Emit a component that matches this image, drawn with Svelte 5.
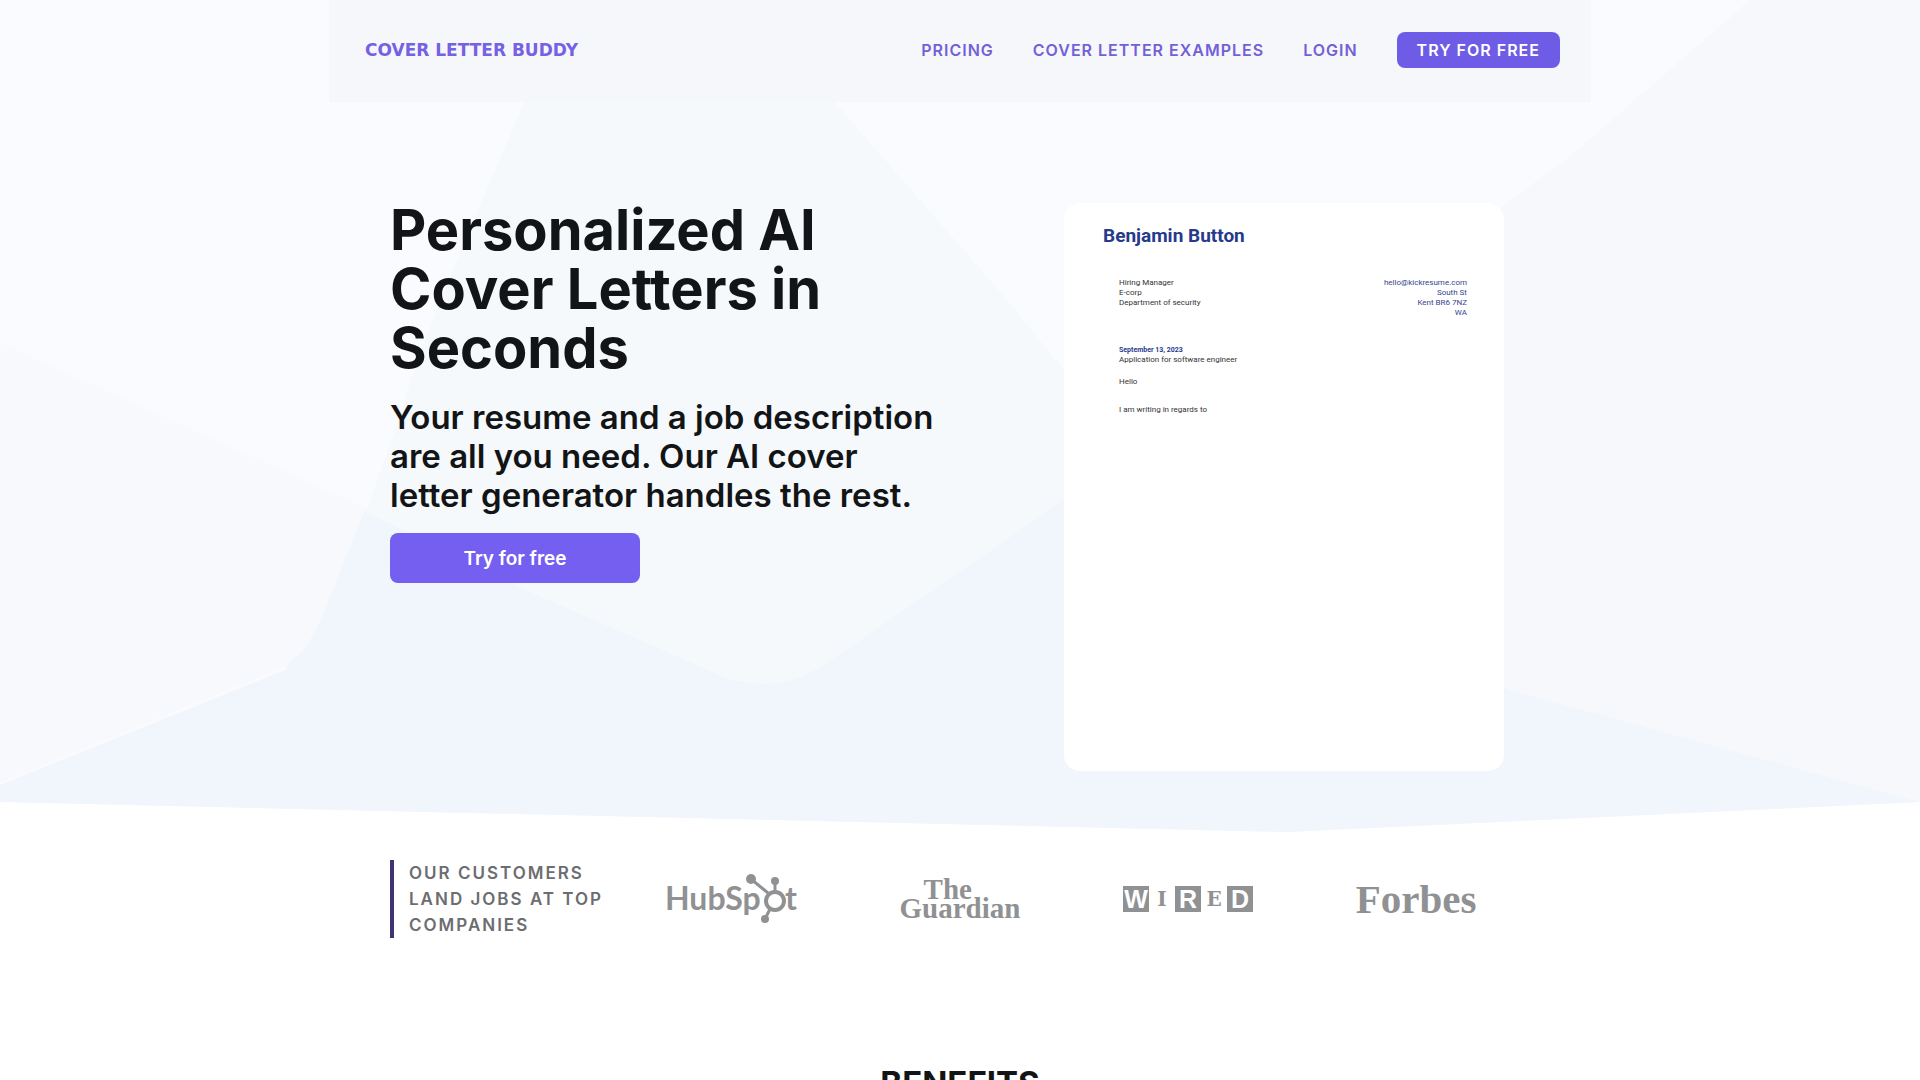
<script>
  const links = [
    { label: 'Pricing', href: '#pricing' },
    { label: 'Cover letter examples', href: '#examples' },
    { label: 'Login', href: '#login' }
  ];
  const wired = ['W', 'I', 'R', 'E', 'D'];
</script>

<div class="page">
  <section class="top">
    <svg class="backdrop" viewBox="0 0 1920 832" preserveAspectRatio="none" aria-hidden="true">
      <path fill="#f9fbfe" d="M0 0H1920V802L1287 832L0 802Z" />
      <path fill="#f1f5fc" d="M0 785L285 670L366 508L1064 500L1510 690L1920 802L1287 832L0 802Z" />
      <path fill="#f7f9fc" d="M0 343L366 508L323 614Q307 655 281 668L0 783Z" />
      <path fill="#f5f9fc" d="M530 90H824L1007 300L1064 370V500L830 661Q797 684 765 684Q733 684 708 670L530 592L366 512Q382 471 414 371Q442 290 530 90Z" />
      <path fill="#f7f8fb" d="M1750 0H1920V802L1510 690L1300 610V400Q1460 230 1560 165Z" />
    </svg>

    <header class="nav">
      <a class="brand" href="#home">COVER LETTER BUDDY</a>
      <nav class="links" aria-label="Main">
        {#each links as link}
          <a href={link.href}>{link.label}</a>
        {/each}
        <a class="pill" href="#try">Try for free</a>
      </nav>
    </header>

    <div class="hero">
      <div class="pitch">
        <h1>Personalized AI Cover Letters in Seconds</h1>
        <p>Your resume and a job description are all you need. Our AI cover letter generator handles the rest.</p>
        <button type="button">Try for free</button>
      </div>
      <article class="letter">
        <h2>Benjamin Button</h2>
        <div class="parties">
          <div>Hiring Manager<br />E-corp<br />Department of security</div>
          <address>hello@kickresume.com<br />South St<br />Kent BR6 7NZ<br />WA</address>
        </div>
        <div class="subject"><strong>September 13, 2023</strong><br />Application for software engineer</div>
        <p class="hello">Hello</p>
        <p class="body">I am writing in regards to</p>
      </article>
    </div>
  </section>

  <section class="customers">
    <p class="claim">Our customers land jobs at top companies</p>
    <div class="logos">
      <svg class="hubspot" viewBox="0 0 132 50" role="img" aria-label="HubSpot">
        <g fill="#8f9193">
          <text x="-1" y="36" font-size="32">HubSp</text>
          <text x="119" y="36" font-size="32">t</text>
          <circle cx="85" cy="5" r="5" />
          <circle cx="109" cy="7" r="4" />
          <circle cx="99" cy="45" r="4" />
        </g>
        <g fill="none" stroke="#8f9193">
          <circle cx="109" cy="27" r="9" stroke-width="4" />
          <path stroke-width="3" d="M85 5L102 19M109 7V18M104 35L99 45" />
        </g>
      </svg>
      <div class="guardian"><span class="the">The</span><span>Guardian</span></div>
      <div class="wired">
        {#each wired as letter, i}
          <span class:boxed={i % 2 === 0}>{letter}</span>
        {/each}
      </div>
      <div class="forbes">Forbes</div>
    </div>
  </section>

  <h2 class="benefits">BENEFITS</h2>
</div>

<style>
  :global(body) {
    margin: 0;
    background: #fff;
  }
  .page {
    height: 100vh;
    overflow: hidden;
    font-family: Inter, 'Liberation Sans', sans-serif;
    color: #131416;
  }
  .top {
    position: relative;
    padding-bottom: 61px;
  }
  .backdrop {
    position: absolute;
    inset: 0;
    width: 100%;
    height: 100%;
  }
  .nav {
    position: relative;
    box-sizing: border-box;
    max-width: 1262px;
    height: 102px;
    margin: 0 auto;
    padding: 0 31px 2px 36px;
    display: flex;
    align-items: center;
    justify-content: space-between;
    background: #f6f7fa;
  }
  .nav a {
    color: #7360d8;
    text-decoration: none;
  }
  .nav .brand {
    font: 700 17px 'DejaVu Sans', sans-serif;
    color: #7561e4;
  }
  .links {
    display: flex;
    align-items: center;
    gap: 39px;
    font-size: 16px;
    line-height: 36px;
    font-weight: 600;
    letter-spacing: 1px;
    text-transform: uppercase;
  }
  .links .pill {
    padding: 0 20px;
    border-radius: 8px;
    background: #6f5ce6;
    color: #fff;
  }
  .hero {
    position: relative;
    max-width: 1140px;
    margin: 0 auto;
    padding-top: 101px;
    display: flex;
    justify-content: space-between;
    align-items: flex-start;
  }
  .pitch {
    width: 550px;
    margin-top: -2px;
  }
  h1 {
    width: 480px;
    margin: 0 0 20px;
    font-size: 56px;
    line-height: 59px;
    font-weight: 700;
  }
  .pitch p {
    margin: 0 0 18px;
    font-size: 33px;
    line-height: 39px;
    font-weight: 600;
  }
  button {
    width: 250px;
    height: 50px;
    border: 0;
    border-radius: 8px;
    background: #745ff0;
    color: #fff;
    font: 600 19px Inter, sans-serif;
  }
  .letter {
    box-sizing: border-box;
    width: 440px;
    height: 568px;
    margin-right: 26px;
    padding: 20px 37px 0 39px;
    border-radius: 16px;
    background: #fff;
    font-family: Roboto, sans-serif;
    font-size: 8px;
    line-height: 10px;
    color: #333;
  }
  .letter h2 {
    margin: 0 0 29px;
    font-size: 19px;
    line-height: 26px;
    color: #263a8c;
  }
  .parties {
    display: flex;
    justify-content: space-between;
    padding-left: 16px;
  }
  address {
    font-style: normal;
    text-align: right;
    color: #35458f;
  }
  .subject {
    margin: 27px 0 0 16px;
  }
  .subject strong {
    font-size: 7px;
    color: #263a8c;
  }
  .letter p {
    margin: 12px 0 0 16px;
  }
  .letter .body {
    margin-top: 18px;
  }
  .customers {
    max-width: 1140px;
    margin: 0 auto;
    padding-top: 28px;
    display: flex;
    align-items: center;
  }
  .claim {
    box-sizing: border-box;
    width: 228px;
    margin: 0;
    padding-left: 15px;
    border-left: 4px solid #413270;
    font-size: 17px;
    line-height: 26px;
    font-weight: 600;
    letter-spacing: 2px;
    text-transform: uppercase;
    white-space: normal;
    color: #6c6d70;
  }
  .logos {
    flex: 1;
    display: grid;
    grid-template-columns: repeat(4, 1fr);
    align-items: center;
    justify-items: center;
    color: #8f9193;
  }
  .hubspot {
    width: 132px;
    height: 50px;
    overflow: visible;
    font-family: Lato, sans-serif;
    font-weight: 700;
  }
  .guardian,
  .forbes {
    font-family: 'Liberation Serif', serif;
    font-weight: 700;
  }
  .guardian {
    display: flex;
    flex-direction: column;
    font-size: 29px;
    line-height: 19px;
  }
  .guardian .the {
    padding-left: 24px;
  }
  .wired {
    display: flex;
  }
  .wired span {
    width: 26px;
    text-align: center;
    font: 700 20px/26px 'DejaVu Serif', serif;
  }
  .wired .boxed {
    background: #8f9193;
    color: #fff;
    font: 700 25px/26px 'Liberation Sans', sans-serif;
  }
  .forbes {
    font-size: 41px;
    line-height: 50px;
  }
  .benefits {
    margin: 125px 0 0;
    font-size: 33px;
    line-height: 40px;
    text-align: center;
  }
</style>
